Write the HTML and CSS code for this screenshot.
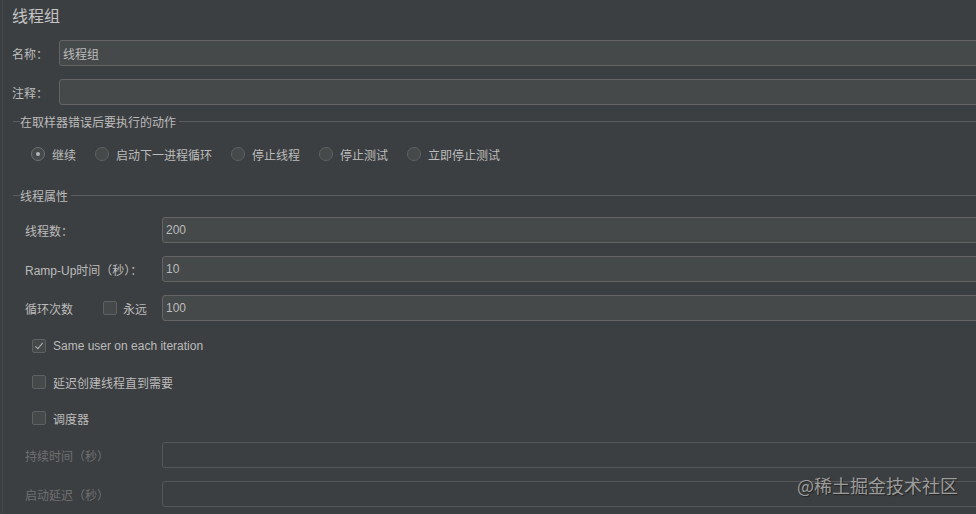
FILE: index.html
```html
<!DOCTYPE html>
<html lang="zh-CN">
<head>
    <meta charset="UTF-8">
    <meta name="viewport" content="width=device-width, initial-scale=1.0">
    <title>线程组</title>
    <link rel="stylesheet" href="styles.css">
</head>
<body>
    <div id="painel">
        <div class="titulo">线程组</div>

        <div class="linha topo">
            <label class="rotulo curto">名称：</label>
            <input type="text" class="campo" value="线程组">
        </div>
        <div class="linha topo">
            <label class="rotulo curto">注释：</label>
            <input type="text" class="campo" value="">
        </div>

        <div class="grupo-titulo"><span>在取样器错误后要执行的动作</span></div>
        <div class="radios">
            <div class="opcao"><span class="radio marcado"></span>继续</div>
            <div class="opcao"><span class="radio"></span>启动下一进程循环</div>
            <div class="opcao"><span class="radio"></span>停止线程</div>
            <div class="opcao"><span class="radio"></span>停止测试</div>
            <div class="opcao"><span class="radio"></span>立即停止测试</div>
        </div>

        <div class="grupo-titulo segundo"><span>线程属性</span></div>

        <div class="linha prop">
            <label class="rotulo largo">线程数：</label>
            <input type="text" class="campo" value="200">
        </div>
        <div class="linha prop">
            <label class="rotulo largo">Ramp-Up时间（秒）：</label>
            <input type="text" class="campo" value="10">
        </div>
        <div class="linha prop">
            <div class="rotulo largo loop">
                <span>循环次数</span>
                <span class="check-item"><span class="caixa"></span>永远</span>
            </div>
            <input type="text" class="campo" value="100">
        </div>

        <div class="check-linha"><span class="caixa marcada"></span>Same user on each iteration</div>
        <div class="check-linha"><span class="caixa"></span>延迟创建线程直到需要</div>
        <div class="check-linha"><span class="caixa"></span>调度器</div>

        <div class="linha prop desativado">
            <label class="rotulo largo">持续时间（秒）</label>
            <input type="text" class="campo" value="" disabled>
        </div>
        <div class="linha prop desativado">
            <label class="rotulo largo">启动延迟（秒）</label>
            <input type="text" class="campo" value="" disabled>
        </div>
    </div>

    <div id="marca">@稀土掘金技术社区</div>
</body>
</html>
```

FILE: styles.css
```css
html, body {
    margin: 0;
    padding: 0;
    height: 100%;
    overflow: hidden;
}

body {
    background-color: #3c3f41;
    color: #bbbbbb;
    font-family: "Liberation Sans", "Noto Sans CJK SC", sans-serif;
    font-size: 12px;
}

#painel {
    margin-left: 2px;
    border-left: 1px solid #46494b;
    padding-left: 9px;
    height: 100%;
}

.titulo {
    height: 40px;
    line-height: 34px;
    font-size: 16px;
    color: #c4c4c4;
}

.linha {
    display: flex;
    align-items: center;
    height: 26px;
    margin-bottom: 13px;
}

.rotulo {
    flex: none;
}

.rotulo.curto {
    width: 47px;
}

.prop {
    padding-left: 13px;
}

.rotulo.largo {
    width: 137px;
}

.campo {
    flex: 1;
    height: 26px;
    box-sizing: border-box;
    margin: 0 -20px 0 0;
    padding: 0 3px;
    background-color: #45494a;
    border: 1px solid #646464;
    border-radius: 3px;
    color: #bbbbbb;
    font-family: "Liberation Sans", "Noto Sans CJK SC", sans-serif;
    font-size: 12px;
    outline: none;
}

.campo:disabled {
    background-color: #3c3f41;
    border-color: #555758;
}

.desativado .rotulo {
    color: #6e7072;
}

.grupo-titulo {
    display: flex;
    align-items: center;
    height: 20px;
    margin-top: -7px;
    margin-right: -20px;
}

.grupo-titulo::before {
    content: "";
    width: 7px;
    height: 1px;
    background-color: #5a5d5f;
    margin-left: 1px;
}

.grupo-titulo::after {
    content: "";
    flex: 1;
    height: 1px;
    background-color: #5a5d5f;
    margin-left: 3px;
}

.grupo-titulo.segundo {
    margin-top: 18px;
    margin-bottom: 12px;
}

.radios {
    display: flex;
    align-items: center;
    height: 26px;
    margin-top: 10px;
    padding-left: 19px;
}

.opcao {
    display: flex;
    align-items: center;
    margin-right: 19px;
}

.radio {
    width: 14px;
    height: 14px;
    box-sizing: border-box;
    border: 1px solid #5e6163;
    border-radius: 50%;
    background-color: #45494a;
    margin-right: 7px;
    display: flex;
    align-items: center;
    justify-content: center;
}

.radio.marcado {
    border-color: #6e7173;
}

.radio.marcado::after {
    content: "";
    width: 4px;
    height: 4px;
    border-radius: 50%;
    background-color: #b4b4b4;
}

.loop {
    display: flex;
    align-items: center;
}

.check-item {
    display: flex;
    align-items: center;
    margin-left: 30px;
}

.check-item .caixa {
    margin-right: 6px;
}

.check-linha {
    display: flex;
    align-items: center;
    height: 24px;
    margin-bottom: 12px;
    padding-left: 20px;
}

.check-linha .caixa {
    margin-right: 7px;
}

.caixa {
    width: 14px;
    height: 14px;
    box-sizing: border-box;
    border: 1px solid #5e6163;
    border-radius: 2px;
    background-color: #45494a;
    position: relative;
    flex: none;
}

.caixa.marcada::after {
    content: "";
    position: absolute;
    left: 4px;
    top: 1px;
    width: 3px;
    height: 7px;
    border-right: 1.5px solid #b4b4b4;
    border-bottom: 1.5px solid #b4b4b4;
    transform: rotate(40deg);
}

#marca {
    position: absolute;
    right: 18px;
    bottom: 16px;
    font-family: "Noto Sans CJK SC", sans-serif;
    font-size: 18px;
    color: #9c9c9c;
    text-shadow: 1px 1px 1px #222;
}
```
